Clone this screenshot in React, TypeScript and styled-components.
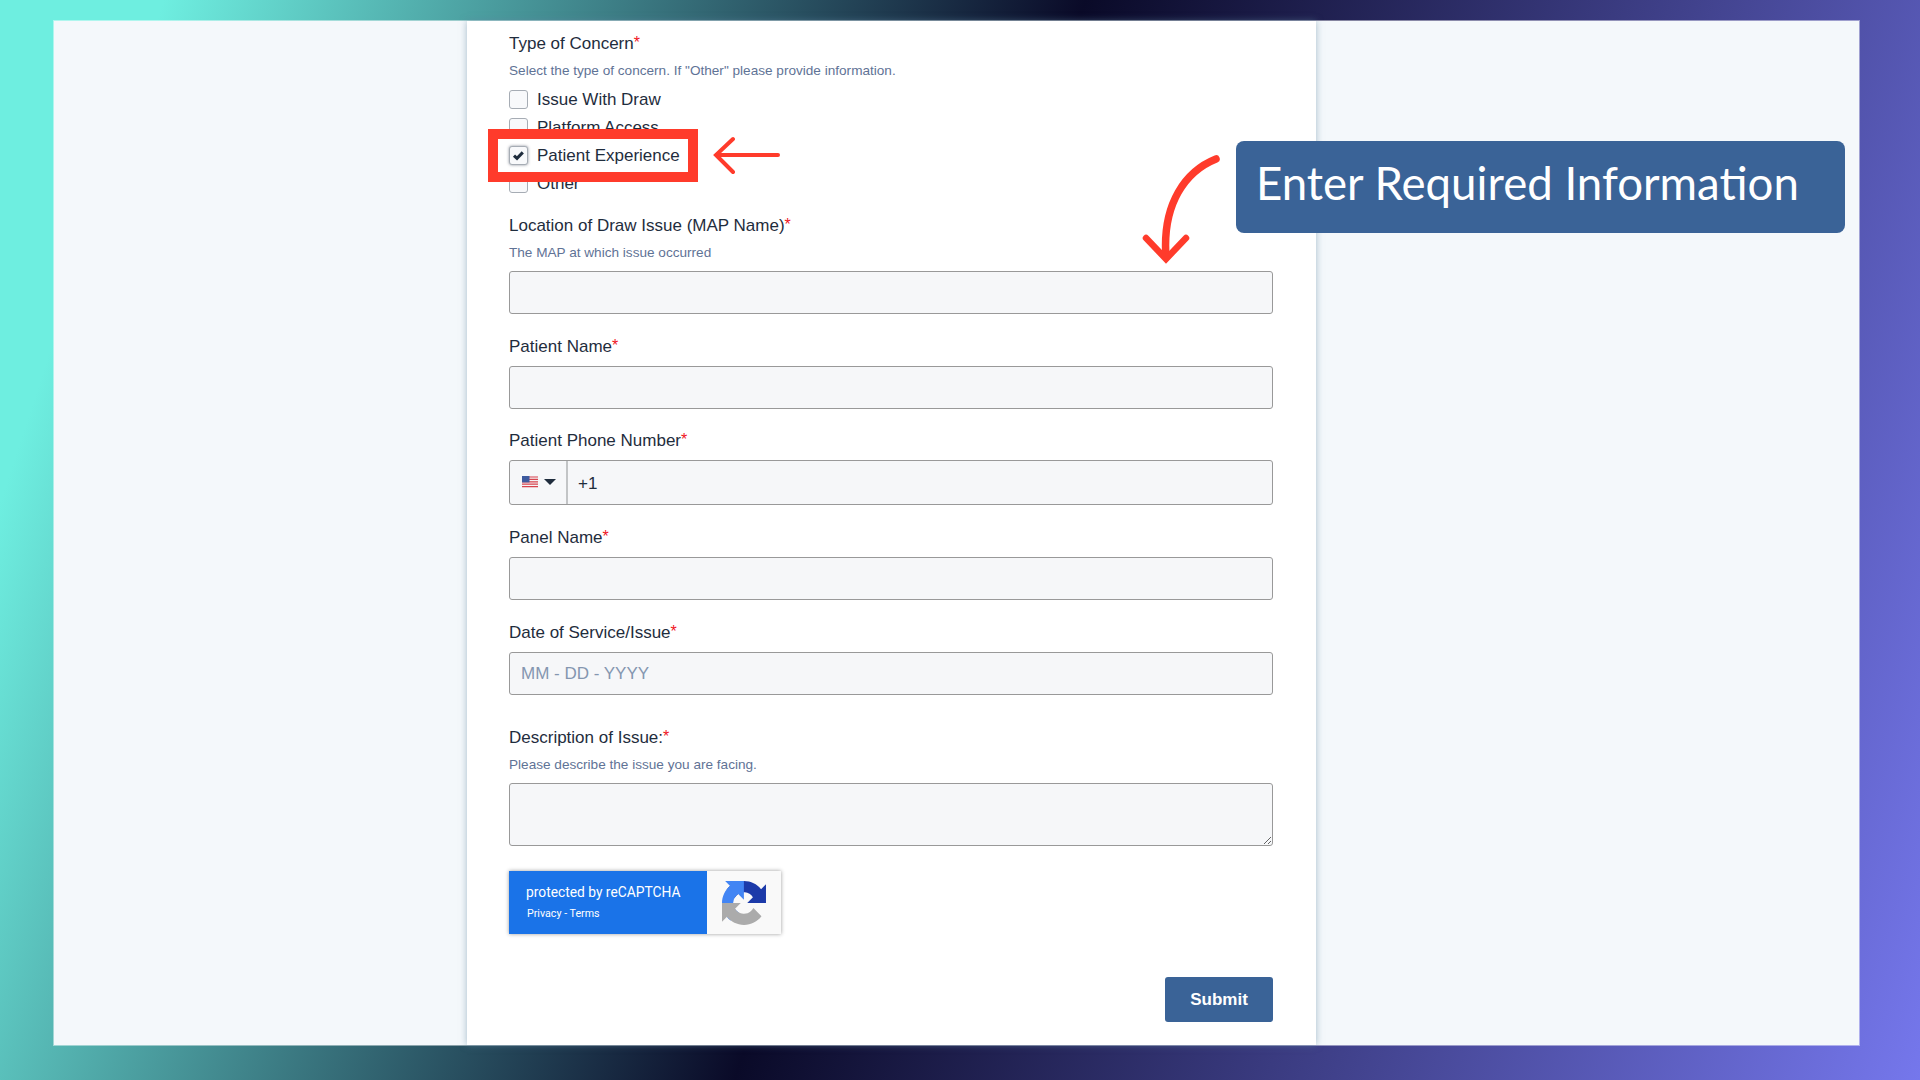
import React from 'react';
import styled, { createGlobalStyle } from 'styled-components';

const GlobalStyle = createGlobalStyle`
  html, body {
    margin: 0;
    padding: 0;
    height: 100%;
    overflow: hidden;
  }
  * {
    box-sizing: border-box;
  }
`;

const Page = styled.div`
  width: 100vw;
  height: 100vh;
  padding: 21px 61px 35px 54px;
  display: flex;
  background: linear-gradient(108deg, #6eeee0 7.2%, #0a0a28 47.8%, #7577ec 100%);
  font-family: 'Liberation Sans', Arial, sans-serif;
`;

const Screen = styled.main`
  position: relative;
  flex: 1;
  display: flex;
  background: #f4f8fb;
  box-shadow: 0 0 0 1px rgba(255, 255, 255, 0.45);
`;

const Panel = styled.section`
  width: 849px;
  margin-left: 413px;
  padding: 9px 43px 0 42px;
  background: #fff;
  box-shadow: 0 0 7px rgba(95, 135, 160, 0.55);
`;

const Field = styled.div<{ $gap?: number }>`
  margin-bottom: ${p => p.$gap ?? 19}px;
`;

const Label = styled.div`
  height: 24px;
  line-height: 27px;
  font-size: 17px;
  color: #1f2d3d;
  margin-bottom: 9px;
`;

const Star = styled.span`
  color: #f0141e;
  font-size: 16px;
  line-height: 0;
  vertical-align: 1px;
`;

const Hint = styled.div`
  height: 18px;
  line-height: 18px;
  font-size: 13.6px;
  color: #5f7396;
  margin: -1px 0 9px;
`;

const Options = styled.div`
  display: flex;
  flex-direction: column;
  gap: 9px;
  margin-top: 10px;
`;

const Option = styled.div`
  display: flex;
  align-items: center;
  gap: 9px;
  height: 19px;
  font-size: 17px;
  color: #1f2d3d;
`;

const Box = styled.span<{ $checked?: boolean }>`
  width: 19px;
  height: 19px;
  display: flex;
  align-items: center;
  justify-content: center;
  border: 1px solid #a6acb4;
  border-radius: 3px;
  background: #f8f9fb;
  box-shadow: ${p => (p.$checked ? '0 0 3px rgba(40, 50, 70, 0.55)' : 'none')};
`;

const TextInput = styled.input`
  display: block;
  width: 100%;
  height: 43px;
  padding: 0 11px;
  border: 1px solid #999;
  border-radius: 3px;
  background: #f6f7f9;
  font: 17px 'Liberation Sans', Arial, sans-serif;
  color: #1f2d3d;
  outline: none;

  &::placeholder {
    color: #8496b0;
    opacity: 1;
  }
`;

const TextArea = styled.textarea`
  display: block;
  width: 100%;
  height: 63px;
  border: 1px solid #999;
  border-radius: 3px;
  background: #f6f7f9;
  outline: none;
`;

const PhoneGroup = styled.div`
  display: flex;
  height: 45px;
  border: 1px solid #999;
  border-radius: 3px;
  background: #f6f7f9;
`;

const CountryButton = styled.div`
  width: 58px;
  display: flex;
  align-items: center;
  gap: 6px;
  padding: 0 0 2px 12px;
  border-right: 2px solid #c2c4c6;
`;

const Caret = styled.span`
  width: 0;
  height: 0;
  border-left: 6px solid transparent;
  border-right: 6px solid transparent;
  border-top: 6px solid #1f2d3d;
`;

const PhoneInput = styled.input`
  flex: 1;
  min-width: 0;
  padding: 2px 10px 0;
  border: 0;
  background: transparent;
  font: 17px 'Liberation Sans', Arial, sans-serif;
  color: #1f2d3d;
  outline: none;
`;

const Captcha = styled.div`
  display: flex;
  width: 272px;
  height: 63px;
  margin-top: 25px;
  box-shadow: 0 0 4px rgba(0, 0, 0, 0.4);
  font-family: Roboto, Arial, sans-serif;
`;

const CaptchaText = styled.div`
  width: 198px;
  padding: 12px 0 0 17px;
  background: #1a73e8;
  color: #fff;
`;

const CaptchaTitle = styled.div`
  font-size: 13.8px;
  line-height: 18px;
`;

const CaptchaLinks = styled.div`
  font-size: 10.7px;
  line-height: 14px;
  margin: 6px 0 0 1px;
`;

const CaptchaLogo = styled.div`
  flex: 1;
  display: flex;
  align-items: center;
  justify-content: center;
  background: #f9f9f9;
`;

const Actions = styled.div`
  display: flex;
  justify-content: flex-end;
  margin-top: 43px;
`;

const SubmitButton = styled.button`
  width: 108px;
  height: 45px;
  border: 0;
  border-radius: 3px;
  background: #3a6397;
  color: #fff;
  font: bold 17px 'Liberation Sans', Arial, sans-serif;
`;

const RedBox = styled.div`
  position: absolute;
  left: 434px;
  top: 108px;
  width: 210px;
  height: 53px;
  border: 10px solid #ff3b2b;
`;

const ArrowLeft = styled.svg`
  position: absolute;
  left: 656px;
  top: 114px;
`;

const ArrowDown = styled.svg`
  position: absolute;
  left: 1086px;
  top: 130px;
`;

const Callout = styled.div`
  position: absolute;
  left: 1182px;
  top: 120px;
  width: 609px;
  height: 92px;
  padding: 14px 0 0 20px;
  border-radius: 8px;
  background: #3a6397;
  color: #fff;
  font-family: Lato, sans-serif;
  font-size: 45.6px;
  line-height: 56px;
`;

const options = [
  { name: 'Issue With Draw' },
  { name: 'Platform Access' },
  { name: 'Patient Experience', checked: true },
  { name: 'Other' },
];

const CheckMark = () => (
  <svg width="13" height="11" viewBox="0 0 13 11">
    <path d="M2 5.6 L5 8.4 L10.8 2.4" fill="none" stroke="#1f2d3d" strokeWidth="3" />
  </svg>
);

const UsFlag = () => (
  <svg width="16" height="12" viewBox="0 0 16 12">
    <rect width="16" height="12" rx="1" fill="#f4f4f6" />
    <path d="M0 1h16M0 3.4h16M0 5.8h16M0 8.2h16M0 10.6h16" stroke="#d8434e" strokeWidth="1.2" />
    <rect width="7.5" height="6.4" fill="#3d5a9e" />
  </svg>
);

const RecaptchaMark = () => (
  <svg width="44" height="44" viewBox="0 0 64 64">
    <path
      fill="#1c3aa9"
      d="M64 31.955l-.033-1.37V4.687l-7.16 7.16C50.948 4.674 42.033.093 32.05.093c-10.4 0-19.622 4.96-25.458 12.64l11.736 11.86a15.55 15.55 0 0 1 4.754-5.334c2.05-1.6 4.952-2.906 8.968-2.906.485 0 .86.057 1.135.163 4.976.393 9.288 3.14 11.828 7.124l-8.307 8.307L64 31.953"
    />
    <path
      fill="#4285f4"
      d="M31.862.094l-1.37.033H4.594l7.16 7.16C4.58 13.147 0 22.06 0 32.046c0 10.4 4.96 19.622 12.64 25.458L24.5 45.768a15.55 15.55 0 0 1-5.334-4.754c-1.6-2.05-2.906-4.952-2.906-8.968 0-.485.057-.86.163-1.135.393-4.976 3.14-9.288 7.124-11.828l8.307 8.307.006-27.296"
    />
    <path
      fill="#ababab"
      d="M.001 32.045l.033 1.37v25.898l7.16-7.16c5.86 7.173 14.774 11.754 24.76 11.754 10.4 0 19.622-4.96 25.458-12.64l-11.736-11.86a15.55 15.55 0 0 1-4.754 5.334c-2.05 1.6-4.952 2.906-8.968 2.906-.485 0-.86-.057-1.135-.163-4.976-.393-9.288-3.14-11.828-7.124l8.307-8.307-27.296.006"
    />
  </svg>
);

const App: React.FC = () => {
  return (
    <Page>
      <GlobalStyle />
      <Screen>
        <Panel>
          <Field>
            <Label>Type of Concern<Star>*</Star></Label>
            <Hint>Select the type of concern. If "Other" please provide information.</Hint>
            <Options>
              {options.map(o => (
                <Option key={o.name}>
                  <Box $checked={o.checked}>{o.checked && <CheckMark />}</Box>
                  {o.name}
                </Option>
              ))}
            </Options>
          </Field>
          <Field>
            <Label>Location of Draw Issue (MAP Name)<Star>*</Star></Label>
            <Hint>The MAP at which issue occurred</Hint>
            <TextInput />
          </Field>
          <Field $gap={18}>
            <Label>Patient Name<Star>*</Star></Label>
            <TextInput />
          </Field>
          <Field>
            <Label>Patient Phone Number<Star>*</Star></Label>
            <PhoneGroup>
              <CountryButton>
                <UsFlag />
                <Caret />
              </CountryButton>
              <PhoneInput defaultValue="+1" />
            </PhoneGroup>
          </Field>
          <Field>
            <Label>Panel Name<Star>*</Star></Label>
            <TextInput />
          </Field>
          <Field $gap={29}>
            <Label>Date of Service/Issue<Star>*</Star></Label>
            <TextInput placeholder="MM - DD - YYYY" />
          </Field>
          <Field $gap={0}>
            <Label>Description of Issue:<Star>*</Star></Label>
            <Hint>Please describe the issue you are facing.</Hint>
            <TextArea />
          </Field>
          <Captcha>
            <CaptchaText>
              <CaptchaTitle>protected by reCAPTCHA</CaptchaTitle>
              <CaptchaLinks>Privacy - Terms</CaptchaLinks>
            </CaptchaText>
            <CaptchaLogo>
              <RecaptchaMark />
            </CaptchaLogo>
          </Captcha>
          <Actions>
            <SubmitButton>Submit</SubmitButton>
          </Actions>
        </Panel>
        <RedBox />
        <ArrowLeft width="76" height="44" viewBox="0 0 76 44">
          <path
            d="M68 20 H7 M23 4 L6 20 L23 37"
            fill="none"
            stroke="#ff3b2b"
            strokeWidth="4"
            strokeLinecap="round"
            strokeLinejoin="miter"
          />
        </ArrowLeft>
        <ArrowDown width="90" height="124" viewBox="0 0 90 124">
          <path
            d="M76 8 C46 20 22 52 26 106"
            fill="none"
            stroke="#ff3b2b"
            strokeWidth="7.5"
            strokeLinecap="round"
          />
          <path
            d="M6 87 L26 108 L46 87"
            fill="none"
            stroke="#ff3b2b"
            strokeWidth="6.5"
            strokeLinecap="round"
          />
        </ArrowDown>
        <Callout>Enter Required Information</Callout>
      </Screen>
    </Page>
  );
};

export default App;
